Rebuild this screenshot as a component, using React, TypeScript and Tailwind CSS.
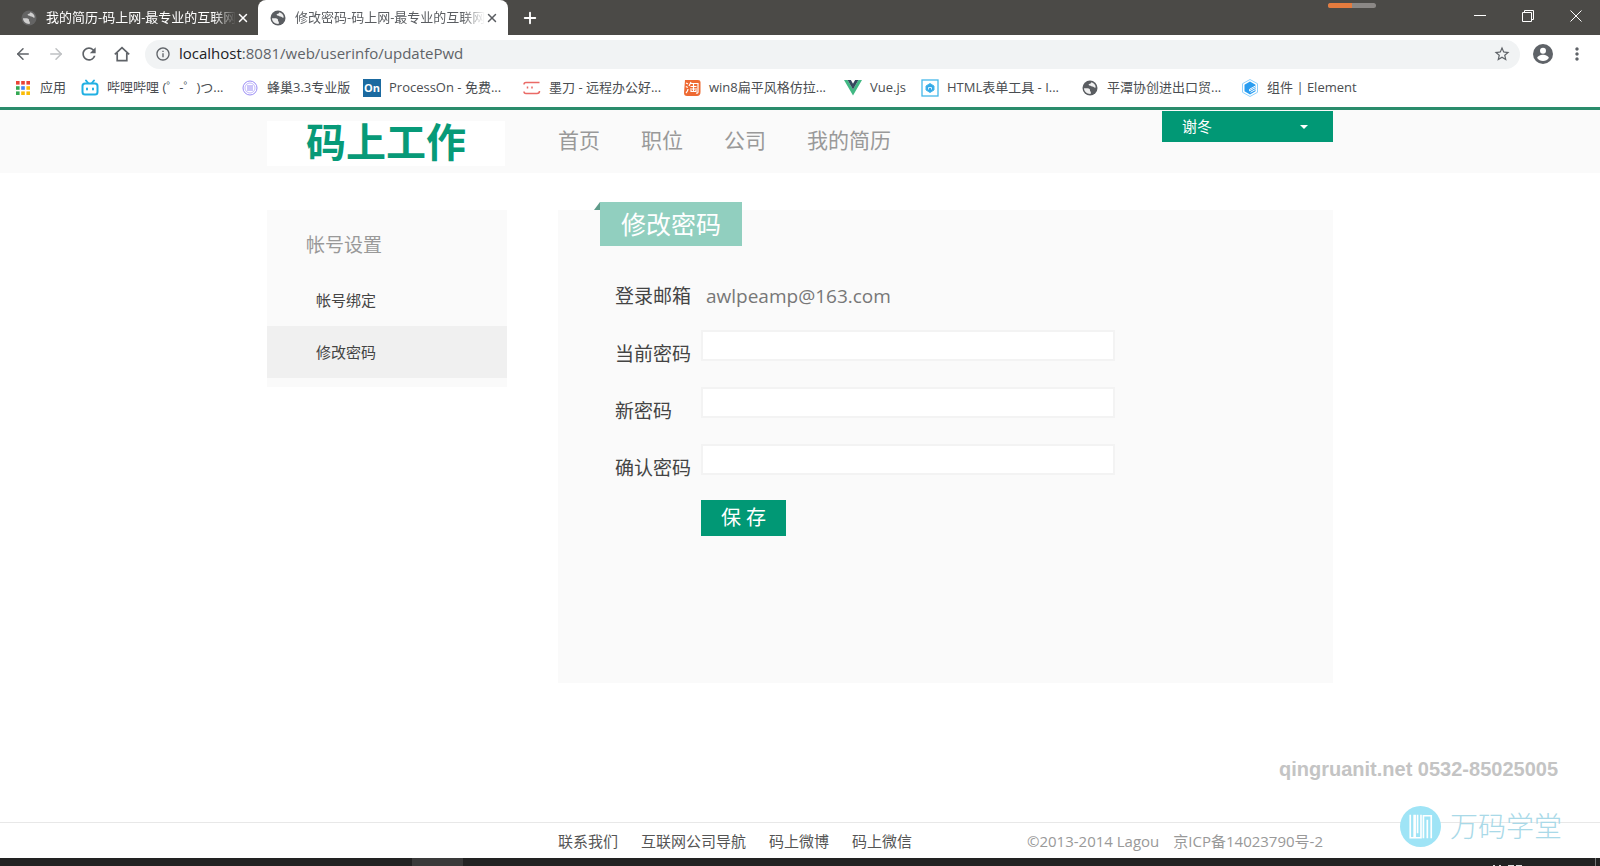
import type { ReactNode } from 'react';
import { ArrowLeft, ArrowRight, Plus, X } from 'lucide-react';
import { MdInfoOutline, MdMoreVert, MdRefresh, MdStarBorder } from 'react-icons/md';

const PASSWORD_FIELDS = [
  { id: 'oldpassword', label: '当前密码' },
  { id: 'newpassword', label: '新密码' },
  { id: 'comfirmpassword', label: '确认密码' },
];

const NAV = ['首页', '职位', '公司', '我的简历'];
const FOOTER_LINKS = ['联系我们', '互联网公司导航', '码上微博', '码上微信'];

function GlobeIcon({ className }: { className: string }) {
  return (
    <svg viewBox="0 0 16 16" className={className}>
      <circle cx="8" cy="8" r="7.5" fill="currentColor" />
      <path
        d="M2 8.300h3.600c1.800 0 2.600 1 2.400 2.200-.1.900.9.900.9 1.900L8.600 14C5 14.200 2 11.600 2 8.300ZM9.300 2.200c-.2 1.300-1 1.600-2.100 1.700-.9.100-.6 1.500.3 1.600 1.500.2 1.900 1.100 3 1.100 1.300 0 1.200 1.300 3.200 1 .1-2.500-1.800-4.800-4.400-5.400Z"
        fill="#fff"
        fillOpacity="0.9"
      />
    </svg>
  );
}

function HomeIcon() {
  return (
    <svg viewBox="0 0 16 16" className="ml-[15px] size-4" fill="none" stroke="currentColor" strokeWidth="1.700">
      <path d="M.8 8.300 8 1.600l7.200 6.700M3.200 7v7.600h9.600V7" />
    </svg>
  );
}

function AccountIcon() {
  return (
    <svg viewBox="0 0 20 20" className="ml-[13px] size-5">
      <circle cx="10" cy="10" r="10" fill="currentColor" />
      <circle cx="10" cy="6.800" r="3" fill="#fff" />
      <path d="M4.200 14c0-2 3.500-3.300 5.800-3.300s5.800 1.300 5.800 3.300c-1.200 1.900-3.400 3-5.800 3s-4.600-1.100-5.800-3Z" fill="#fff" />
    </svg>
  );
}

function AppsIcon() {
  const colors = ['#ea4335', '#ea4335', '#ea4335', '#34a853', '#4285f4', '#fbbc05', '#34a853', '#fbbc05', '#fbbc05'];
  return (
    <svg viewBox="0 0 14 14" className="size-[14px]">
      {colors.map((fill, i) => (
        <rect key={i} x={(i % 3) * 5.2} y={Math.floor(i / 3) * 5.2} width="3.6" height="3.6" fill={fill} />
      ))}
    </svg>
  );
}

function BilibiliIcon() {
  return (
    <svg viewBox="0 0 18 18" className="size-[18px]" fill="none" stroke="#20b0e3" strokeWidth="2" strokeLinecap="round">
      <path d="M5 1.5 7 4M13 1.5 11 4" />
      <rect x="1.5" y="4.5" width="15" height="11" rx="2.5" />
      <path d="M6 9.500v1M12 9.500v1" />
    </svg>
  );
}

function HiveIcon() {
  return (
    <svg viewBox="0 0 16 16" className="size-4" fill="none" stroke="#9a8cf5">
      <circle cx="8" cy="8" r="7" />
      <circle cx="8" cy="8" r="5" strokeWidth="0.6" />
      <path d="M5 6h6M5 8h6M5 10h6" />
    </svg>
  );
}

function ModaoIcon() {
  return (
    <svg viewBox="0 0 18 14" className="h-[14px] w-[18px]" fill="none" stroke="#ea6a66" strokeWidth="1.5">
      <path d="M1 3.500Q1 1.500 3 1.500H16.500M1 10.500Q1 12.500 3 12.500H14Q16.500 12.500 16.500 10" />
      <path d="M4.500 5.500v2M9 5.500v2" />
    </svg>
  );
}

function TaobaoIcon() {
  return (
    <svg viewBox="0 0 18 18" className="size-[18px]">
      <path d="M2 1H15Q17.500 1 17.500 3V13Q17.500 17 14 17H4Q1 17 1 14Z" fill="#ee6a33" />
      <path
        d="M3 4l2 1M2.800 7.500l2 1M3 14q2-2 2-4M8 3l-2 4M7.500 4.500H15V13q0 1.500-2 1M7.500 7.500h6M7 10h7M10.500 5v7.500M8 11v1.500h5V11"
        fill="none"
        stroke="#fff"
        strokeWidth="1.200"
      />
    </svg>
  );
}

function VueIcon() {
  return (
    <svg viewBox="0 0 18 16" className="h-4 w-[18px]">
      <path d="M0 0H3.600L9 9.400 14.400 0H18L9 15.600Z" fill="#41b883" />
      <path d="M3.600 0H6.900L9 3.700 11.100 0H14.400L9 9.400Z" fill="#35495e" />
    </svg>
  );
}

function FormIcon() {
  return (
    <svg viewBox="0 0 18 18" className="size-[18px]" fill="none" stroke="#45b8ea">
      <rect x="1" y="1" width="16" height="16" strokeWidth="1.300" />
      <path d="M9 4.500 13 7v4L9 13.500 5 11V7Z" fill="#35a8e8" />
      <path d="M7.500 10.500V8.500h3v2" stroke="#d6f0fc" />
    </svg>
  );
}

function ElementIcon() {
  return (
    <svg viewBox="0 0 16 18" className="h-[18px] w-4">
      <path d="M8 .5 15.500 4.700V13.300L8 17.500.5 13.300V4.700Z" fill="none" stroke="#8fd0fb" />
      <path d="M8 2.500 13.500 5.700V12.300L8 15.500 2.500 12.300V5.700Z" fill="#2a9df0" />
      <path d="M13.500 7 7.500 10.300v1.500l6-3.200M13.500 10.500l-5 2.800" stroke="#fff" fill="none" />
    </svg>
  );
}

function Bookmark({ icon, width, children }: { icon: ReactNode; width: string; children: ReactNode }) {
  return (
    <a href="#" className={`flex shrink-0 items-center gap-2 whitespace-nowrap ${width}`}>
      <span className="flex w-[18px] shrink-0 justify-center">{icon}</span>
      <span>{children}</span>
    </a>
  );
}

function Tab({ title, active }: { title: string; active?: boolean }) {
  return (
    <div
      className={
        active
          ? 'flex h-full w-[250px] items-center rounded-t-lg bg-white pl-3 text-[#5a5d61]'
          : 'flex h-full w-[237px] items-center text-white'
      }
    >
      <GlobeIcon className={active ? 'size-4 shrink-0 text-[#5a5d61]' : 'size-4 shrink-0 text-[#6b6b6c] opacity-80'} />
      <span className="ml-[9px] w-[190px] whitespace-nowrap [mask-image:linear-gradient(to_right,#000_88%,transparent)]">
        {title}
      </span>
      <button type="button" aria-label="关闭标签页">
        <X className="size-[14px]" strokeWidth={2.5} />
      </button>
    </div>
  );
}

function BrowserChrome() {
  return (
    <div className="bg-white text-[13px] text-[#4a4d51]">
      <div className="flex h-[35px] bg-[#4b4a47]">
        <div className="flex pl-[21px]">
          <Tab title="我的简历-码上网-最专业的互联网" />
          <Tab title="修改密码-码上网-最专业的互联网" active />
          <button type="button" aria-label="新标签页" className="ml-[13px] text-white">
            <Plus className="size-[18px]" strokeWidth={2.5} />
          </button>
        </div>
        <div className="mt-[3px] mr-[98px] ml-auto h-[5px] w-12 rounded-full bg-[#8b8886]">
          <div className="h-full w-1/2 rounded-l-full bg-[#e57b3e]" />
        </div>
        <div className="flex items-center gap-9 pr-[18px] pb-1 text-white">
          <svg viewBox="0 0 12 12" className="size-3" stroke="currentColor">
            <path d="M0 5.500h12" />
          </svg>
          <svg viewBox="0 0 12 12" className="size-3" stroke="currentColor" fill="none">
            <path d="M.5 2.500h9v9h-9zM2.500 2.500v-2h9v9h-2" />
          </svg>
          <svg viewBox="0 0 12 12" className="size-3" stroke="currentColor">
            <path d="M.5.5l11 11M11.500.5l-11 11" />
          </svg>
        </div>
      </div>

      <div className="flex h-[37px] items-center pt-px pr-[13px] pl-[14px] text-[#5f6368]">
        <ArrowLeft className="size-[18px]" />
        <ArrowRight className="ml-[15px] size-[18px] text-[#bfc1c3]" />
        <MdRefresh className="ml-[14px] size-5" />
        <HomeIcon />
        <div className="ml-[15px] flex h-[29px] grow items-center rounded-full bg-[#f1f3f4] pr-[9px] pl-[10px]">
          <MdInfoOutline className="size-4" />
          <span className="ml-2 pb-px font-['Open_Sans',sans-serif] text-[15px]">
            <span className="text-[#202124]">localhost</span>:8081/web/userinfo/updatePwd
          </span>
          <MdStarBorder className="ml-auto size-[18px]" />
        </div>
        <AccountIcon />
        <MdMoreVert className="ml-[14px] size-5" />
      </div>

      <div className="flex h-[35px] items-center overflow-hidden pb-1 pl-[14px]">
        <Bookmark icon={<AppsIcon />} width="w-[67px]">应用</Bookmark>
        <Bookmark icon={<BilibiliIcon />} width="w-[160px]">哔哩哔哩 (゜-゜)つ...</Bookmark>
        <Bookmark icon={<HiveIcon />} width="w-[122px]">蜂巢3.3专业版</Bookmark>
        <Bookmark
          icon={<span className="w-[18px] bg-[#1b6aa0] text-center text-[11px] leading-[18px] font-bold text-white">On</span>}
          width="w-[160px]"
        >
          ProcessOn - 免费...
        </Bookmark>
        <Bookmark icon={<ModaoIcon />} width="w-[160px]">墨刀 - 远程办公好...</Bookmark>
        <Bookmark icon={<TaobaoIcon />} width="w-[161px]">win8扁平风格仿拉...</Bookmark>
        <Bookmark icon={<VueIcon />} width="w-[77px]">Vue.js</Bookmark>
        <Bookmark icon={<FormIcon />} width="w-[160px]">HTML表单工具 - I...</Bookmark>
        <Bookmark icon={<GlobeIcon className="size-4 text-[#5a5d61]" />} width="w-[160px]">平潭协创进出口贸...</Bookmark>
        <Bookmark icon={<ElementIcon />} width="w-[120px]">组件 | Element</Bookmark>
      </div>
    </div>
  );
}

function SiteHeader() {
  return (
    <header className="border-t-[3px] border-[#2a8c6c] bg-[#fafafa]">
      <div className="mx-auto flex h-[63px] w-full max-w-[1066px] items-start">
        <a
          href="#"
          className="mt-[11px] flex h-[45px] w-[238px] items-center justify-center bg-white pb-1 text-[40px] leading-10 font-bold text-[#079a78]"
        >
          码上工作
        </a>
        <nav className="ml-[53px] flex h-[62px] items-center gap-[41px] text-[21px] text-[#999]">
          {NAV.map((item) => (
            <a key={item} href="#">
              {item}
            </a>
          ))}
        </nav>
        <button
          type="button"
          className="mt-px ml-auto flex h-[31px] w-[171px] items-center justify-between bg-[#019875] pr-[25px] pl-5 text-[15px] text-white"
        >
          谢冬
          <span className="border-x-4 border-t-4 border-x-transparent border-t-white" />
        </button>
      </div>
    </header>
  );
}

function Sidebar() {
  return (
    <aside className="w-[240px] shrink-0 bg-[#fafafa] pt-[21px] pb-[9px] text-[15px] text-[#444]">
      <h2 className="pl-[39px] text-[19px] leading-7 text-[#999]">帐号设置</h2>
      <a href="#" className="mt-[15px] block pl-[49px] leading-[52px]">
        帐号绑定
      </a>
      <a href="#" className="block bg-[#f0f0f0] pl-[49px] leading-[52px]">
        修改密码
      </a>
    </aside>
  );
}

function PasswordPanel() {
  return (
    <section className="relative min-h-[473px] grow bg-[#fafafa] pt-[72px] pl-[57px]">
      <h1 className="absolute -top-2 left-[42px] bg-[#91cfbf] px-[21px] text-[25px] leading-[44px] text-white">
        修改密码
        <svg viewBox="0 0 6 8" className="absolute top-0 -left-[6px] h-2 w-[6px]">
          <path d="M6 0v8H0Z" fill="#5f9c8b" />
        </svg>
      </h1>
      <form className="text-[19px] text-[#444]">
        <div className="flex h-12 leading-7">
          <span className="w-[91px]">登录邮箱</span>
          <span className="font-['Open_Sans',sans-serif] text-[#777]">awlpeamp@163.com</span>
        </div>
        {PASSWORD_FIELDS.map((field) => (
          <div key={field.id} className="flex h-[57px] items-start">
            <label htmlFor={field.id} className="w-[86px] pt-[10px] leading-7">
              {field.label}
            </label>
            <input id={field.id} type="password" className="h-[31px] w-[414px] border-2 border-[#f3f3f3] bg-white px-2" />
          </div>
        ))}
        <button type="button" className="-mt-px ml-[86px] h-9 w-[85px] bg-[#019875] text-[20px] text-white">
          保 存
        </button>
      </form>
    </section>
  );
}

function SiteFooter() {
  return (
    <footer className="border-t border-[#e8e8e8] bg-white">
      <div className="mx-auto flex h-[35px] w-full max-w-[1066px] items-center pt-px pr-[10px] pl-[291px] text-[15px] text-[#555]">
        <div className="flex gap-[23px]">
          {FOOTER_LINKS.map((item) => (
            <a key={item} href="#">
              {item}
            </a>
          ))}
        </div>
        <div className="ml-auto flex gap-[14px] text-[#999]">
          <span>©2013-2014 Lagou</span>
          <span>京ICP备14023790号-2</span>
        </div>
      </div>
    </footer>
  );
}

function Watermark() {
  return (
    <div className="pointer-events-none absolute right-[38px] bottom-[19px]">
      <p className="mr-1 text-right font-['Liberation_Sans',sans-serif] text-[20px] leading-6 font-bold text-[#c4c4c4]">
        qingruanit.net 0532-85025005
      </p>
      <div className="mt-6 flex items-center justify-end gap-[9px]">
        <svg viewBox="0 0 42 42" className="size-[41px]" fill="none">
          <circle cx="21" cy="21" r="21" fill="#9fe4f6" />
          <path
            d="M10.500 9v23.500h5V9M14.500 9v23.500h7V9M18 9v19M24 33V10h8v23M28 14v19"
            stroke="#fff"
            strokeWidth="1.700"
          />
        </svg>
        <span className="text-[28px] leading-[42px] font-light text-[#a9d9e8]">万码学堂</span>
      </div>
    </div>
  );
}

export default function App() {
  return (
    <div className="relative flex min-h-screen flex-col bg-white font-['Open_Sans','Noto_Sans_CJK_SC',sans-serif]">
      <BrowserChrome />
      <SiteHeader />
      <main className="mx-auto flex w-full max-w-[1066px] grow items-start gap-[51px] pt-[37px]">
        <Sidebar />
        <PasswordPanel />
      </main>
      <SiteFooter />
      <div className="flex h-2 bg-[#222]">
        <div className="ml-[412px] w-[51px] bg-[#3a3a3a]" />
        <svg viewBox="0 0 108 8" className="ml-auto h-2 w-[108px]" stroke="#ddd">
          <path d="M1 7.500h2M7 7.500h2M16 7.500h6M24 7.500h6" />
          <path d="M103.500 0v8" stroke="#777" />
        </svg>
      </div>
      <Watermark />
    </div>
  );
}
